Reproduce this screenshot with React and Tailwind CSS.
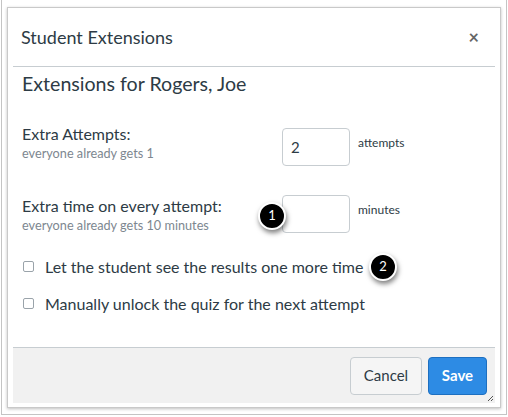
import React from "react";

function Badge({ n }) {
  return (
    <div className="absolute flex h-[28px] w-[28px] items-center justify-center rounded-full border-2 border-white bg-black text-[13px] text-white shadow-[1px_3px_5px_rgba(0,0,0,0.5)]">
      {n}
    </div>
  );
}

export default function App() {
  return (
    <div
      className="h-[417px] w-[508px] bg-white"
      style={{ fontFamily: "Lato, 'Open Sans', sans-serif" }}
    >
      <div className="ml-[1px] h-[415px] w-[506px] border border-t-0 border-[#c4c4c4] pl-[5px] pt-[7px]">
        <div className="flex h-[401px] w-[494px] flex-col border border-[#c9c9c9] px-[5px] pb-[4px] shadow-[0_1px_3px_rgba(0,0,0,0.25)] text-[#2d3b45]">
          <div className="flex h-[59px] shrink-0 items-center justify-between border-b border-[#c7cdd1] pl-[8px] pr-[16px]">
            <span className="text-[18px]">Student Extensions</span>
            <span className="text-[18px] font-bold text-[#666]">×</span>
          </div>
          <div className="relative flex-1 pl-[9px]">
            <div className="mt-[5px] text-[19.6px] leading-[24px]">Extensions for Rogers, Joe</div>
            <div className="mt-[28px] flex">
              <div className="w-[260px]">
                <div className="text-[16px] leading-[19px]">Extra Attempts:</div>
                <div className="mt-[2px] text-[12.7px] leading-[16px] text-[#7d8790]">everyone already gets 1</div>
              </div>
              <div className="mt-[4px] flex h-[38px] w-[68px] items-center rounded-[4px] border border-[#c7cdd1] pl-[8px] text-[15px]">2</div>
              <div className="ml-[8px] mt-[11px] text-[12px] leading-[15px]">attempts</div>
            </div>
            <div className="mt-[30px] flex">
              <div className="w-[260px]">
                <div className="text-[16px] leading-[19px]">Extra time on every attempt:</div>
                <div className="mt-[2px] text-[12.7px] leading-[16px] text-[#7d8790]">everyone already gets 10 minutes</div>
              </div>
              <div className="mt-[-1px] h-[38px] w-[68px] rounded-[4px] border border-[#c7cdd1]"></div>
              <div className="ml-[8px] mt-[6px] text-[12px] leading-[15px]">minutes</div>
            </div>
            <div className="mt-[24px] flex items-center gap-[11px] pl-[1px]">
              <div className="h-[11px] w-[11px] rounded-[2px] border border-[#9aa3aa] bg-white"></div>
              <span className="text-[16px] leading-[19px]">Let the student see the results one more time</span>
            </div>
            <div className="mt-[18px] flex items-center gap-[11px] pl-[1px]">
              <div className="h-[11px] w-[11px] rounded-[2px] border border-[#9aa3aa] bg-white"></div>
              <span className="text-[16px] leading-[19px]">Manually unlock the quiz for the next attempt</span>
            </div>
            <div className="absolute left-[245px] top-[135px]"><Badge n="1" /></div>
            <div className="absolute left-[356px] top-[186px]"><Badge n="2" /></div>
          </div>
          <div className="relative flex h-[56px] shrink-0 items-center justify-end gap-[6px] border-t border-[#c7cdd1] bg-[#f1f1f1] pr-[8px]">
            <button className="h-[38px] w-[72px] rounded-[4px] border border-[#c7cdd1] bg-[#f5f5f5] text-[15px] text-[#2d3b45]">Cancel</button>
            <button className="h-[38px] w-[59px] rounded-[4px] border border-[#1d6fc0] bg-[#2d8be4] text-[15px] font-bold text-white">Save</button>
            <svg className="absolute bottom-[1px] right-[1px]" width="8" height="8" viewBox="0 0 8 8">
              <path d="M7 2 L2 7 M7 5 L5 7" stroke="#555" strokeWidth="1" />
            </svg>
          </div>
        </div>
      </div>
    </div>
  );
}
